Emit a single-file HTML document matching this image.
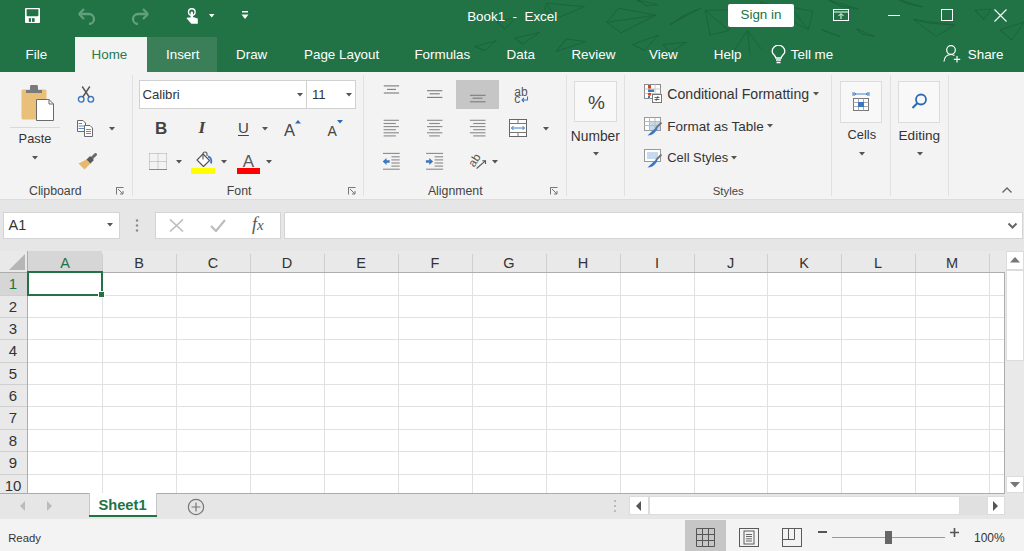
<!DOCTYPE html>
<html><head><meta charset="utf-8"><style>
html,body{margin:0;padding:0;width:1024px;height:551px;overflow:hidden;background:#fff}
body{position:relative;font-family:"Liberation Sans", sans-serif}
.t{position:absolute;white-space:nowrap;line-height:1}
svg{display:block}
</style></head><body>
<div style="position:absolute;left:0px;top:0px;width:1024px;height:72px;background:#217346"></div>
<svg style="position:absolute;left:0px;top:0px;" width="1024" height="72" viewBox="0 0 1024 72"><g fill="none" stroke="#1a5c37" stroke-width="0.9" opacity="0.75"><polygon points="546.3,3.3 584.5,6.6 556.2,18.3 544.6,10.0"/><path d="M546.3,3.3 L556.2,18.3"/><polygon points="496.4,21.6 516.4,17.4 504.7,29.0"/><path d="M496.4,21.6 L504.7,29.0"/><polygon points="514.7,38.2 539.6,32.4 523.0,44.0"/><path d="M514.7,38.2 L523.0,44.0"/><polygon points="474.8,46.5 496.4,40.7 484.8,50.7"/><path d="M474.8,46.5 L484.8,50.7"/><polygon points="556.2,51.5 586.0,41.5 566.2,39.0"/><path d="M556.2,51.5 L566.2,39.0"/><polygon points="606.9,22.3 618.6,8.2 656.0,15.2 621.0,32.8"/><path d="M606.9,22.3 L656.0,15.2"/><polygon points="670.1,24.6 700.6,8.2 686.5,14.0"/><path d="M670.1,24.6 L686.5,14.0"/><polygon points="705.3,10.5 738.0,9.4 728.7,30.5 710.0,35.2"/><path d="M705.3,10.5 L728.7,30.5"/><polygon points="632.7,44.5 658.4,35.2 644.4,50.4"/><path d="M632.7,44.5 L644.4,50.4"/><polygon points="663.0,44.5 686.5,42.2 670.0,52.7"/><path d="M663.0,44.5 L670.0,52.7"/><polygon points="637.0,0.0 658.0,4.7 646.7,5.9"/><path d="M637.0,0.0 L646.7,5.9"/><polygon points="790.0,6.9 812.9,11.4 808.3,29.7 794.6,22.9"/><path d="M790.0,6.9 L808.3,29.7"/><polygon points="828.8,0.0 858.6,9.1 840.0,6.0"/><path d="M828.8,0.0 L840.0,6.0"/><polygon points="913.4,19.4 927.0,22.9 954.5,25.1 936.3,36.6"/><path d="M913.4,19.4 L954.5,25.1"/><polygon points="975.0,10.3 991.0,9.1 984.2,19.4"/><path d="M975.0,10.3 L984.2,19.4"/><polygon points="822.0,29.7 840.3,36.6 830.0,33.0"/><path d="M822.0,29.7 L830.0,33.0"/><polygon points="856.3,28.6 874.6,36.6 862.0,34.0"/><path d="M856.3,28.6 L862.0,34.0"/><polygon points="899.7,0.0 922.5,6.9 908.0,4.0"/><path d="M899.7,0.0 L908.0,4.0"/><polygon points="760.0,2.0 785.0,8.0 770.0,18.0"/><path d="M760.0,2.0 L770.0,18.0"/><polygon points="1000.0,30.0 1024.0,22.0 1012.0,40.0"/><path d="M1000.0,30.0 L1012.0,40.0"/><path d="M733.4,51.6 L747.5,30.5 M761.5,49.2 L747.5,30.5 M750,55 L747.5,30.5"/></g></svg>
<div style="position:absolute;left:75px;top:37px;width:72px;height:35px;background:#f3f3f3"></div>
<div style="position:absolute;left:147px;top:37px;width:70px;height:35px;background:#3b7f58"></div>
<div id="tabs">
<div class="t" style="left:25.6px;top:47.9px;font-size:13.4px;color:#fff;font-weight:normal;">File</div>
<div class="t" style="left:166.0px;top:47.9px;font-size:13.4px;color:#fff;font-weight:normal;">Insert</div>
<div class="t" style="left:236.0px;top:47.9px;font-size:13.4px;color:#fff;font-weight:normal;">Draw</div>
<div class="t" style="left:304.0px;top:47.9px;font-size:13.4px;color:#fff;font-weight:normal;">Page Layout</div>
<div class="t" style="left:414.4px;top:47.9px;font-size:13.4px;color:#fff;font-weight:normal;">Formulas</div>
<div class="t" style="left:506.6px;top:47.9px;font-size:13.4px;color:#fff;font-weight:normal;">Data</div>
<div class="t" style="left:571.4px;top:47.9px;font-size:13.4px;color:#fff;font-weight:normal;">Review</div>
<div class="t" style="left:649.0px;top:47.9px;font-size:13.4px;color:#fff;font-weight:normal;">View</div>
<div class="t" style="left:713.8px;top:47.9px;font-size:13.4px;color:#fff;font-weight:normal;">Help</div>
<div class="t" style="left:790.8px;top:47.9px;font-size:13.4px;color:#fff;font-weight:normal;">Tell me</div>
<div class="t" style="left:967.8px;top:47.9px;font-size:13.4px;color:#fff;font-weight:normal;">Share</div>
<div class="t" style="left:91.6px;top:47.9px;font-size:13.4px;color:#2a7a4f;font-weight:normal;">Home</div>
</div>
<div class="t" style="left:467.2px;top:9.6px;font-size:13.4px;color:#fff;font-weight:normal;">Book1&nbsp;&nbsp;-&nbsp;&nbsp;Excel</div>
<div style="position:absolute;left:728px;top:4px;width:66px;height:23px;background:#fff;border-radius:2px"></div>
<div class="t" style="left:740.5px;top:8.3px;font-size:13.4px;color:#217346;font-weight:normal;">Sign in</div>
<svg style="position:absolute;left:25px;top:8px;" width="15" height="15" viewBox="0 0 15 15"><rect x="0" y="0" width="15" height="15" rx="1" fill="#fff"/><path d="M1.6,1.3 H13.4 V7.3 A1,1 0 0 1 12.4,8.3 H2.6 A1,1 0 0 1 1.6,7.3 Z" fill="#217346"/><rect x="3.8" y="10.2" width="5.8" height="3.7" fill="#217346"/><rect x="6" y="10.2" width="1" height="3.7" fill="#fff"/></svg>
<svg style="position:absolute;left:78px;top:8px;" width="18" height="17" viewBox="0 0 18 17"><path d="M3,6 H11 A5,5 0 0 1 11,16" fill="none" stroke="#62a07e" stroke-width="2.3"/><path d="M1,6 L6,1 M1,6 L6,11" fill="none" stroke="#62a07e" stroke-width="2.3"/></svg>
<svg style="position:absolute;left:131px;top:8px;transform:scaleX(-1)" width="18" height="17" viewBox="0 0 18 17"><path d="M3,6 H11 A5,5 0 0 1 11,16" fill="none" stroke="#62a07e" stroke-width="2.3"/><path d="M1,6 L6,1 M1,6 L6,11" fill="none" stroke="#62a07e" stroke-width="2.3"/></svg>
<svg style="position:absolute;left:185px;top:6px;" width="15" height="19" viewBox="0 0 15 19"><circle cx="6.8" cy="6.1" r="3.3" fill="none" stroke="#fff" stroke-width="1.4"/><rect x="5.6" y="5.5" width="2.4" height="8" rx="1.2" fill="#fff"/><path d="M5.8,11.5 L2.5,11.5 L1.5,12.3 L6.3,17.8 H12.8 V12.6 L7.8,11 Z" fill="#fff"/></svg>
<svg style="position:absolute;left:208.5px;top:14px;" width="6" height="4" viewBox="0 0 6 4"><path d="M0,0 H5.5 L2.75,3.5 Z" fill="#fff"/></svg>
<svg style="position:absolute;left:241px;top:11px;" width="8" height="9" viewBox="0 0 8 9"><rect x="1" y="0" width="6" height="1.5" fill="#fff"/><path d="M0.5,3.5 H7.5 L4,8 Z" fill="#fff"/></svg>
<svg style="position:absolute;left:833px;top:9px;" width="16" height="12" viewBox="0 0 16 12"><rect x="0.5" y="0.5" width="15" height="11" fill="none" stroke="#fff"/><path d="M0.5,3 H15.5" stroke="#fff"/><path d="M8,10 V5 M5.5,7 L8,4.5 L10.5,7" fill="none" stroke="#fff"/></svg>
<div style="position:absolute;left:888px;top:15px;width:12px;height:1px;background:#fff"></div>
<div style="position:absolute;left:941px;top:9px;width:12px;height:12px;border:1px solid #fff;box-sizing:border-box"></div>
<svg style="position:absolute;left:994px;top:9px;" width="13" height="13" viewBox="0 0 13 13"><path d="M0.5,0.5 L12.5,12.5 M12.5,0.5 L0.5,12.5" stroke="#fff" stroke-width="1.1"/></svg>
<svg style="position:absolute;left:771px;top:45px;" width="15" height="19" viewBox="0 0 15 19"><path d="M4.8,13 C4.8,10.5 1.2,9.5 1.2,6.5 A6.3,6.3 0 1 1 13.8,6.5 C13.8,9.5 10.2,10.5 10.2,13 Z" fill="none" stroke="#fff" stroke-width="1.3"/><path d="M5,15 H10 M5.5,17.5 H9.5" stroke="#fff" stroke-width="1.3"/></svg>
<svg style="position:absolute;left:943px;top:44px;" width="19" height="19" viewBox="0 0 19 19"><circle cx="8" cy="6" r="4.3" fill="none" stroke="#fff" stroke-width="1.2"/><path d="M1,17.5 C1.5,12.5 4.5,10.5 8,10.5 C9.5,10.5 10.5,11 11.5,11.5" fill="none" stroke="#fff" stroke-width="1.2"/><path d="M14,12 V18.5 M10.8,15.3 H17.2" stroke="#fff" stroke-width="1.2"/></svg>
<div style="position:absolute;left:0px;top:72px;width:1024px;height:128px;background:#f3f3f3"></div>
<div style="position:absolute;left:0px;top:199px;width:1024px;height:1px;background:#dcdcdc"></div>
<div style="position:absolute;left:132px;top:75px;width:1px;height:121px;background:#e1e1e1"></div>
<div style="position:absolute;left:363px;top:75px;width:1px;height:121px;background:#e1e1e1"></div>
<div style="position:absolute;left:566px;top:75px;width:1px;height:121px;background:#e1e1e1"></div>
<div style="position:absolute;left:624px;top:75px;width:1px;height:121px;background:#e1e1e1"></div>
<div style="position:absolute;left:831px;top:75px;width:1px;height:121px;background:#e1e1e1"></div>
<div style="position:absolute;left:890px;top:75px;width:1px;height:121px;background:#e1e1e1"></div>
<div style="position:absolute;left:948px;top:75px;width:1px;height:121px;background:#e1e1e1"></div>
<svg style="position:absolute;left:20px;top:85px;" width="35" height="37" viewBox="0 0 35 37"><rect x="1.5" y="4.5" width="25" height="30" rx="1.5" fill="#e9c07a"/><path d="M6,8 V5 H10 V2.5 A1.5,1.5 0 0 1 18,2.5 V5 H22 V8 Z" fill="#7a7a7a"/><path d="M16.5,14.5 H29 L33.5,19 V35.5 H16.5 Z" fill="#fff" stroke="#6a6a6a"/><path d="M29,14.5 V19 H33.5" fill="none" stroke="#6a6a6a"/></svg>
<div style="position:absolute;left:10px;top:127px;width:50px;height:1px;background:#dadada"></div>
<div class="t" style="left:18.6px;top:133.3px;font-size:12.8px;color:#333;font-weight:normal;">Paste</div>
<svg style="position:absolute;left:32px;top:155.5px;" width="6" height="4" viewBox="0 0 6 4"><path d="M0,0 H6 L3,3.5 Z" fill="#555"/></svg>
<svg style="position:absolute;left:77px;top:86px;" width="18" height="18" viewBox="0 0 18 18"><circle cx="4.2" cy="13.3" r="2.8" fill="none" stroke="#3b78c2" stroke-width="1.4"/><circle cx="13.8" cy="13.3" r="2.8" fill="none" stroke="#3b78c2" stroke-width="1.4"/><path d="M5.8,11 L12.8,0.5 M12.2,11 L5.2,0.5" stroke="#555" stroke-width="1.4"/></svg>
<svg style="position:absolute;left:76px;top:119px;" width="18" height="19" viewBox="0 0 18 19"><path d="M1.5,1.5 H7 L9.5,4 V12.5 H1.5 Z" fill="#fff" stroke="#6a6a6a"/><path d="M2.5,4.5 H6 M2.5,7 H8 M2.5,9.5 H8" stroke="#5b8fd0"/><path d="M8.5,6.5 H14 L16.5,9 V17.5 H8.5 Z" fill="#fff" stroke="#6a6a6a"/><path d="M10,10.5 H15 M10,12.5 H15 M10,14.5 H15" stroke="#5b8fd0"/></svg>
<svg style="position:absolute;left:109px;top:127px;" width="7" height="4" viewBox="0 0 7 4"><path d="M0,0 H6 L3,3.5 Z" fill="#555"/></svg>
<svg style="position:absolute;left:77px;top:152px;" width="20" height="19" viewBox="0 0 20 19"><path d="M18.5,2.5 L15,6" stroke="#6a6a6a" stroke-width="3" stroke-linecap="round"/><path d="M15,6 L11,10" stroke="#5a5a5a" stroke-width="5.5"/><path d="M9.5,7.5 L13.5,11.5 L7.5,17.5 L1.5,11.5 Z" fill="#e8b86d"/></svg>
<div class="t" style="left:29.0px;top:185.4px;font-size:12.3px;color:#444;font-weight:normal;">Clipboard</div>
<svg style="position:absolute;left:116px;top:187px;" width="8" height="8" viewBox="0 0 8 8"><path d="M0.5,0 V0.5 H7.5" fill="none" stroke="#777"/><path d="M0.5,0.5 V7.5" stroke="#777"/><path d="M2,2 L7,7 M7,4 V7 H4" fill="none" stroke="#777"/></svg>
<div style="position:absolute;left:139px;top:80px;width:168px;height:29px;background:#fff;border:1px solid #d0d0d0;box-sizing:border-box"></div>
<div style="position:absolute;left:306px;top:80px;width:50px;height:29px;background:#fff;border:1px solid #d0d0d0;box-sizing:border-box"></div>
<div class="t" style="left:142.4px;top:87.6px;font-size:13.2px;color:#333;font-weight:normal;">Calibri</div>
<div class="t" style="left:312.0px;top:87.6px;font-size:13.2px;color:#333;font-weight:normal;">11</div>
<svg style="position:absolute;left:297px;top:93px;" width="6" height="4" viewBox="0 0 6 4"><path d="M0,0 H6 L3,3.5 Z" fill="#555"/></svg>
<svg style="position:absolute;left:346px;top:93px;" width="6" height="4" viewBox="0 0 6 4"><path d="M0,0 H6 L3,3.5 Z" fill="#555"/></svg>
<div class="t" style="left:155.0px;top:119.6px;font-size:17px;color:#444;font-weight:bold;">B</div>
<div class="t" style="left:198.5px;top:119px;font-size:17.5px;color:#444;font-weight:bold;font-family:'Liberation Serif',serif;font-style:italic">I</div>
<div class="t" style="left:238.0px;top:120.0px;font-size:15px;color:#444;font-weight:normal;text-decoration:underline;text-underline-offset:2px">U</div>
<svg style="position:absolute;left:262px;top:127px;" width="6" height="4" viewBox="0 0 6 4"><path d="M0,0 H6 L3,3.5 Z" fill="#555"/></svg>
<div class="t" style="left:284.0px;top:121.8px;font-size:16.5px;color:#444;font-weight:normal;">A</div>
<svg style="position:absolute;left:295px;top:120px;" width="6" height="4" viewBox="0 0 6 4"><path d="M0,3.5 H6 L3,0 Z" fill="#2b6cb5"/></svg>
<div class="t" style="left:327.5px;top:124.2px;font-size:14px;color:#444;font-weight:normal;">A</div>
<svg style="position:absolute;left:337px;top:120px;" width="6" height="4" viewBox="0 0 6 4"><path d="M0,0 H6 L3,3.5 Z" fill="#2b6cb5"/></svg>
<svg style="position:absolute;left:149px;top:153px;" width="18" height="17" viewBox="0 0 18 17"><path d="M0.5,0.5 H17.5 M0.5,0.5 V16 M17.5,0.5 V16 M9,0.5 V16 M0.5,8.5 H17.5" stroke="#a8a8a8" stroke-dasharray="1,1" fill="none"/><path d="M0,16.5 H18" stroke="#8a8a8a"/></svg>
<svg style="position:absolute;left:176px;top:160px;" width="6" height="4" viewBox="0 0 6 4"><path d="M0,0 H6 L3,3.5 Z" fill="#555"/></svg>
<svg style="position:absolute;left:195px;top:151px;" width="20" height="17" viewBox="0 0 20 17"><path d="M2,9 L8,3 L14.5,9.5 L8.5,15.5 Z" fill="#fff" stroke="#555" stroke-width="1.1" stroke-linejoin="round"/><path d="M8,8.5 V3 A2,2 0 0 1 12,3 V5" fill="none" stroke="#555" stroke-width="1.1"/><path d="M13,5.5 C15.5,6 17,8.5 16,12.5" fill="none" stroke="#3b78c2" stroke-width="1.8"/></svg>
<div style="position:absolute;left:191px;top:168px;width:24px;height:6px;background:#ffff00"></div>
<svg style="position:absolute;left:221px;top:160px;" width="6" height="4" viewBox="0 0 6 4"><path d="M0,0 H6 L3,3.5 Z" fill="#555"/></svg>
<div class="t" style="left:242.8px;top:152.8px;font-size:17px;color:#5a5a5a;font-weight:normal;">A</div>
<div style="position:absolute;left:237px;top:168px;width:23px;height:6px;background:#ff0000"></div>
<svg style="position:absolute;left:266px;top:160px;" width="6" height="4" viewBox="0 0 6 4"><path d="M0,0 H6 L3,3.5 Z" fill="#555"/></svg>
<div class="t" style="left:226.8px;top:185.4px;font-size:12.3px;color:#444;font-weight:normal;">Font</div>
<svg style="position:absolute;left:348px;top:187px;" width="8" height="8" viewBox="0 0 8 8"><path d="M0.5,0 V0.5 H7.5" fill="none" stroke="#777"/><path d="M0.5,0.5 V7.5" stroke="#777"/><path d="M2,2 L7,7 M7,4 V7 H4" fill="none" stroke="#777"/></svg>
<div style="position:absolute;left:456px;top:80px;width:43px;height:29px;background:#c6c6c6"></div>
<svg style="position:absolute;left:370px;top:80px;" width="200" height="95" viewBox="0 0 200 95"><rect x="13.80" y="5.35" width="15.30" height="1.1" fill="#7c7c7c"/><rect x="17.00" y="8.85" width="9.00" height="1.1" fill="#7c7c7c"/><rect x="13.80" y="12.45" width="15.30" height="1.1" fill="#7c7c7c"/><rect x="57.00" y="10.15" width="15.30" height="1.1" fill="#7c7c7c"/><rect x="59.60" y="13.25" width="10.20" height="1.1" fill="#7c7c7c"/><rect x="57.00" y="16.85" width="15.30" height="1.1" fill="#7c7c7c"/><rect x="100.00" y="14.75" width="15.60" height="1.1" fill="#7c7c7c"/><rect x="102.50" y="17.65" width="10.00" height="1.1" fill="#7c7c7c"/><rect x="100.00" y="21.25" width="15.60" height="1.1" fill="#7c7c7c"/><rect x="13.60" y="39.75" width="15.30" height="1.1" fill="#8a8a8a"/><rect x="57.00" y="39.75" width="15.40" height="1.1" fill="#8a8a8a"/><rect x="99.90" y="39.75" width="15.60" height="1.1" fill="#8a8a8a"/><rect x="13.60" y="42.95" width="12.20" height="1.1" fill="#8a8a8a"/><rect x="59.20" y="42.95" width="10.60" height="1.1" fill="#8a8a8a"/><rect x="103.20" y="42.95" width="12.30" height="1.1" fill="#8a8a8a"/><rect x="13.60" y="46.05" width="15.30" height="1.1" fill="#8a8a8a"/><rect x="57.00" y="46.05" width="15.40" height="1.1" fill="#8a8a8a"/><rect x="99.90" y="46.05" width="15.60" height="1.1" fill="#8a8a8a"/><rect x="13.60" y="49.15" width="12.20" height="1.1" fill="#8a8a8a"/><rect x="59.20" y="49.15" width="10.60" height="1.1" fill="#8a8a8a"/><rect x="103.20" y="49.15" width="12.30" height="1.1" fill="#8a8a8a"/><rect x="13.60" y="52.25" width="15.30" height="1.1" fill="#8a8a8a"/><rect x="57.00" y="52.25" width="15.40" height="1.1" fill="#8a8a8a"/><rect x="99.90" y="52.25" width="15.60" height="1.1" fill="#8a8a8a"/><rect x="13.60" y="55.35" width="12.20" height="1.1" fill="#8a8a8a"/><rect x="59.20" y="55.35" width="10.60" height="1.1" fill="#8a8a8a"/><rect x="103.20" y="55.35" width="12.30" height="1.1" fill="#8a8a8a"/><rect x="13.00" y="72.85" width="16.70" height="1.1" fill="#8a8a8a"/><rect x="21.40" y="76.25" width="8.30" height="1.1" fill="#8a8a8a"/><rect x="21.40" y="79.35" width="8.30" height="1.1" fill="#8a8a8a"/><rect x="21.40" y="82.45" width="8.30" height="1.1" fill="#8a8a8a"/><rect x="21.40" y="85.55" width="8.30" height="1.1" fill="#8a8a8a"/><rect x="13.00" y="88.65" width="16.70" height="1.1" fill="#8a8a8a"/><rect x="56.10" y="72.85" width="17.00" height="1.1" fill="#8a8a8a"/><rect x="64.60" y="76.25" width="8.50" height="1.1" fill="#8a8a8a"/><rect x="64.60" y="79.35" width="8.50" height="1.1" fill="#8a8a8a"/><rect x="64.60" y="82.45" width="8.50" height="1.1" fill="#8a8a8a"/><rect x="64.60" y="85.55" width="8.50" height="1.1" fill="#8a8a8a"/><rect x="56.10" y="88.65" width="17.00" height="1.1" fill="#8a8a8a"/><path d="M12.7,81.5 L16.5,77.9 V80.2 H19.7 V82.8 H16.5 V85.1 Z" fill="#3a78c0"/><path d="M63.1,81.5 L59.3,77.9 V80.2 H55.9 V82.8 H59.3 V85.1 Z" fill="#3a78c0"/><path d="M106.6,88.5 L115.3,80.9 M112.3,80.7 H115.5 V83.9" fill="none" stroke="#555" stroke-width="1.1"/></svg>
<div class="t" style="left:514.3px;top:85.9px;font-size:12px;color:#555;font-weight:normal;">ab</div>
<div class="t" style="left:514.3px;top:93.4px;font-size:12px;color:#555;font-weight:normal;">c</div>
<svg style="position:absolute;left:520px;top:96px;" width="9" height="7" viewBox="0 0 9 7"><path d="M7.5,0.5 V4 H2 M4,2 L2,4 L4,6" fill="none" stroke="#3b78c2" stroke-width="1.1"/></svg>
<svg style="position:absolute;left:508px;top:118px;" width="20" height="20" viewBox="0 0 20 20"><rect x="1.5" y="1.5" width="17" height="17" fill="#fff" stroke="#666"/><path d="M1.5,5.5 H18.5 M1.5,14.5 H18.5 M10,1.5 V5.5 M10,14.5 V18.5" stroke="#777"/><path d="M3.5,10 H16.5 M5.5,8 L3.5,10 L5.5,12 M14.5,8 L16.5,10 L14.5,12" fill="none" stroke="#3b78c2"/></svg>
<svg style="position:absolute;left:543px;top:127px;" width="6" height="4" viewBox="0 0 6 4"><path d="M0,0 H6 L3,3.5 Z" fill="#555"/></svg>
<div class="t" style="left:469px;top:154.5px;font-size:11.5px;color:#555;transform:rotate(-58deg);transform-origin:6px 6px">ab</div>
<svg style="position:absolute;left:492px;top:160px;" width="6" height="4" viewBox="0 0 6 4"><path d="M0,0 H6 L3,3.5 Z" fill="#555"/></svg>
<div class="t" style="left:427.9px;top:185.4px;font-size:12.3px;color:#444;font-weight:normal;">Alignment</div>
<svg style="position:absolute;left:550px;top:187px;" width="8" height="8" viewBox="0 0 8 8"><path d="M0.5,0 V0.5 H7.5" fill="none" stroke="#777"/><path d="M0.5,0.5 V7.5" stroke="#777"/><path d="M2,2 L7,7 M7,4 V7 H4" fill="none" stroke="#777"/></svg>
<div style="position:absolute;left:574px;top:81px;width:43px;height:41px;background:#f8f8f8;border:1px solid #dcdcdc;box-sizing:border-box"></div>
<div class="t" style="left:588.0px;top:93.0px;font-size:19px;color:#444;font-weight:normal;">%</div>
<div class="t" style="left:570.8px;top:129.7px;font-size:13.8px;color:#333;font-weight:normal;">Number</div>
<svg style="position:absolute;left:593px;top:152px;" width="6" height="4" viewBox="0 0 6 4"><path d="M0,0 H6 L3,3.5 Z" fill="#555"/></svg>
<svg style="position:absolute;left:643px;top:84px;" width="20" height="20" viewBox="0 0 20 20"><rect x="1.5" y="0.5" width="16" height="14" fill="#fff" stroke="#8a8a8a"/><path d="M1.5,5 H17.5 M1.5,9.5 H17.5 M6.5,0.5 V14.5 M12,0.5 V14.5" stroke="#c8c8c8"/><rect x="5" y="1" width="3" height="3.5" fill="#d24726"/><rect x="5" y="5.5" width="6" height="2.5" fill="#3b78c2"/><rect x="5" y="9" width="3" height="2.5" fill="#d24726"/><rect x="5" y="12" width="2" height="2" fill="#3b78c2"/><rect x="9.5" y="10.5" width="9" height="8" fill="#fff" stroke="#777"/><path d="M11.5,13.5 H16.5 M11.5,15.5 H16.5 M15,12 L13,17" stroke="#444" stroke-width="0.8"/></svg>
<div class="t" style="left:667.3px;top:87.2px;font-size:14.1px;color:#333;font-weight:normal;">Conditional Formatting</div>
<svg style="position:absolute;left:813px;top:92px;" width="6" height="4" viewBox="0 0 6 4"><path d="M0,0 H6 L3,3.5 Z" fill="#555"/></svg>
<svg style="position:absolute;left:643px;top:117px;" width="20" height="20" viewBox="0 0 20 20"><rect x="1.5" y="0.5" width="16" height="13" fill="#fff" stroke="#999"/><rect x="6" y="4.5" width="11" height="8.5" fill="#c5d9ef"/><path d="M1.5,4.5 H17.5 M1.5,8.5 H17.5 M6.5,0.5 V13.5 M12,0.5 V13.5" stroke="#bbb"/><path d="M18.5,5.5 L13,11" stroke="#777" stroke-width="2"/><path d="M13.5,10 L11,12.5 C9,14 7,16 4.5,18.5 C8,18.5 11,17 13,14 L14.5,12 Z" fill="#3b78c2"/></svg>
<div class="t" style="left:667.3px;top:119.7px;font-size:13.5px;color:#333;font-weight:normal;">Format as Table</div>
<svg style="position:absolute;left:767px;top:124px;" width="6" height="4" viewBox="0 0 6 4"><path d="M0,0 H6 L3,3.5 Z" fill="#555"/></svg>
<svg style="position:absolute;left:643px;top:149px;" width="20" height="20" viewBox="0 0 20 20"><rect x="1.5" y="0.5" width="16" height="12" fill="#fff" stroke="#999"/><rect x="4" y="3" width="11" height="7" fill="#c5d9ef"/><path d="M18.5,5.5 L13,11" stroke="#777" stroke-width="2"/><path d="M13.5,10 L11,12.5 C9,14 7,16 4.5,18.5 C8,18.5 11,17 13,14 L14.5,12 Z" fill="#3b78c2"/></svg>
<div class="t" style="left:667.3px;top:151.8px;font-size:12.9px;color:#333;font-weight:normal;">Cell Styles</div>
<svg style="position:absolute;left:731px;top:156px;" width="6" height="4" viewBox="0 0 6 4"><path d="M0,0 H6 L3,3.5 Z" fill="#555"/></svg>
<div class="t" style="left:712.7px;top:186.0px;font-size:11.4px;color:#444;font-weight:normal;">Styles</div>
<div style="position:absolute;left:840px;top:81px;width:42px;height:42px;background:#f8f8f8;border:1px solid #dcdcdc;box-sizing:border-box"></div>
<svg style="position:absolute;left:852px;top:91px;" width="18" height="21" viewBox="0 0 18 21"><path d="M1,3 H17 M1,1 V5 M17,1 V5 M4,3 L2,1.5 M4,3 L2,4.5 M14,3 L16,1.5 M14,3 L16,4.5" fill="none" stroke="#3b78c2" stroke-width="0.9"/><rect x="1.5" y="7.5" width="15" height="12" fill="#fff" stroke="#777"/><path d="M1.5,11.5 H16.5 M1.5,15.5 H16.5 M6.5,7.5 V19.5 M11.5,7.5 V19.5" stroke="#aaa"/><rect x="6" y="11" width="6" height="5" fill="#3b78c2"/></svg>
<div class="t" style="left:847.6px;top:129.3px;font-size:12.8px;color:#333;font-weight:normal;">Cells</div>
<svg style="position:absolute;left:859px;top:152px;" width="6" height="4" viewBox="0 0 6 4"><path d="M0,0 H6 L3,3.5 Z" fill="#555"/></svg>
<div style="position:absolute;left:898px;top:81px;width:42px;height:42px;background:#f8f8f8;border:1px solid #dcdcdc;box-sizing:border-box"></div>
<svg style="position:absolute;left:911px;top:93px;" width="17" height="17" viewBox="0 0 17 17"><circle cx="10" cy="6.5" r="5" fill="none" stroke="#2b6cb5" stroke-width="1.8"/><path d="M6.5,10 L1.5,15" stroke="#2b6cb5" stroke-width="2.2"/></svg>
<div class="t" style="left:898.5px;top:129.2px;font-size:13.6px;color:#333;font-weight:normal;">Editing</div>
<svg style="position:absolute;left:917px;top:152px;" width="6" height="4" viewBox="0 0 6 4"><path d="M0,0 H6 L3,3.5 Z" fill="#555"/></svg>
<svg style="position:absolute;left:1001px;top:186px;" width="12" height="8" viewBox="0 0 12 8"><path d="M1.5,6.5 L6,2 L10.5,6.5" fill="none" stroke="#666" stroke-width="1.4"/></svg>
<div style="position:absolute;left:0px;top:200px;width:1024px;height:51px;background:#e6e6e6"></div>
<div style="position:absolute;left:3px;top:212px;width:117px;height:27px;background:#fff;border:1px solid #d4d4d4;box-sizing:border-box"></div>
<div class="t" style="left:8.5px;top:217.9px;font-size:14.5px;color:#333;font-weight:normal;">A1</div>
<svg style="position:absolute;left:107px;top:223px;" width="7" height="4" viewBox="0 0 7 4"><path d="M0,0 H6 L3,3.5 Z" fill="#555"/></svg>
<svg style="position:absolute;left:135px;top:219px;" width="4" height="13" viewBox="0 0 4 13"><circle cx="2" cy="1.5" r="1.2" fill="#8a8a8a"/><circle cx="2" cy="6.5" r="1.2" fill="#8a8a8a"/><circle cx="2" cy="11.5" r="1.2" fill="#8a8a8a"/></svg>
<div style="position:absolute;left:155px;top:212px;width:126px;height:27px;background:#fff;border:1px solid #d4d4d4;box-sizing:border-box"></div>
<svg style="position:absolute;left:169px;top:219px;" width="15" height="13" viewBox="0 0 15 13"><path d="M1,0.5 L14,12.5 M14,0.5 L1,12.5" stroke="#bdbdbd" stroke-width="1.6"/></svg>
<svg style="position:absolute;left:210px;top:219px;" width="16" height="13" viewBox="0 0 16 13"><path d="M1,7 L6,12 L15,1" fill="none" stroke="#bdbdbd" stroke-width="2.2"/></svg>
<div class="t" style="left:252px;top:214.5px;font-size:18px;color:#555;font-family:'Liberation Serif',serif;font-style:italic">f<span style="font-size:15px">x</span></div>
<div style="position:absolute;left:284px;top:212px;width:739px;height:27px;background:#fff;border:1px solid #d4d4d4;box-sizing:border-box"></div>
<svg style="position:absolute;left:1007px;top:222px;" width="11" height="8" viewBox="0 0 11 8"><path d="M1.5,1.5 L5.5,5.5 L9.5,1.5" fill="none" stroke="#666" stroke-width="2"/></svg>
<div style="position:absolute;left:0px;top:251px;width:1024px;height:242px;background:#fff"></div>
<div style="position:absolute;left:0px;top:251px;width:1005px;height:21px;background:#e9e9e9"></div>
<div style="position:absolute;left:0px;top:272px;width:28px;height:221px;background:#e9e9e9"></div>
<div style="position:absolute;left:28px;top:251px;width:74px;height:21px;background:#d6d6d6"></div>
<div style="position:absolute;left:0px;top:272px;width:27px;height:23px;background:#d6d6d6"></div>
<svg style="position:absolute;left:9px;top:254px;" width="17" height="17" viewBox="0 0 17 17"><path d="M16,0 V16 H0 Z" fill="#b6b6b6"/></svg>
<svg style="position:absolute;left:0;top:251px" width="1024" height="243">
<rect x="102" y="3" width="1" height="18" fill="#cfcfcf"/><rect x="102" y="21" width="1" height="222" fill="#e1e1e1"/><rect x="176" y="3" width="1" height="18" fill="#cfcfcf"/><rect x="176" y="21" width="1" height="222" fill="#e1e1e1"/><rect x="250" y="3" width="1" height="18" fill="#cfcfcf"/><rect x="250" y="21" width="1" height="222" fill="#e1e1e1"/><rect x="324" y="3" width="1" height="18" fill="#cfcfcf"/><rect x="324" y="21" width="1" height="222" fill="#e1e1e1"/><rect x="398" y="3" width="1" height="18" fill="#cfcfcf"/><rect x="398" y="21" width="1" height="222" fill="#e1e1e1"/><rect x="472" y="3" width="1" height="18" fill="#cfcfcf"/><rect x="472" y="21" width="1" height="222" fill="#e1e1e1"/><rect x="546" y="3" width="1" height="18" fill="#cfcfcf"/><rect x="546" y="21" width="1" height="222" fill="#e1e1e1"/><rect x="620" y="3" width="1" height="18" fill="#cfcfcf"/><rect x="620" y="21" width="1" height="222" fill="#e1e1e1"/><rect x="694" y="3" width="1" height="18" fill="#cfcfcf"/><rect x="694" y="21" width="1" height="222" fill="#e1e1e1"/><rect x="767" y="3" width="1" height="18" fill="#cfcfcf"/><rect x="767" y="21" width="1" height="222" fill="#e1e1e1"/><rect x="841" y="3" width="1" height="18" fill="#cfcfcf"/><rect x="841" y="21" width="1" height="222" fill="#e1e1e1"/><rect x="915" y="3" width="1" height="18" fill="#cfcfcf"/><rect x="915" y="21" width="1" height="222" fill="#e1e1e1"/><rect x="989" y="3" width="1" height="18" fill="#cfcfcf"/><rect x="989" y="21" width="1" height="222" fill="#e1e1e1"/><rect x="0" y="44" width="27" height="1" fill="#cfcfcf"/><rect x="28" y="44" width="977" height="1" fill="#e1e1e1"/><rect x="0" y="66" width="27" height="1" fill="#cfcfcf"/><rect x="28" y="66" width="977" height="1" fill="#e1e1e1"/><rect x="0" y="88" width="27" height="1" fill="#cfcfcf"/><rect x="28" y="88" width="977" height="1" fill="#e1e1e1"/><rect x="0" y="111" width="27" height="1" fill="#cfcfcf"/><rect x="28" y="111" width="977" height="1" fill="#e1e1e1"/><rect x="0" y="133" width="27" height="1" fill="#cfcfcf"/><rect x="28" y="133" width="977" height="1" fill="#e1e1e1"/><rect x="0" y="155" width="27" height="1" fill="#cfcfcf"/><rect x="28" y="155" width="977" height="1" fill="#e1e1e1"/><rect x="0" y="178" width="27" height="1" fill="#cfcfcf"/><rect x="28" y="178" width="977" height="1" fill="#e1e1e1"/><rect x="0" y="200" width="27" height="1" fill="#cfcfcf"/><rect x="28" y="200" width="977" height="1" fill="#e1e1e1"/><rect x="0" y="223" width="27" height="1" fill="#cfcfcf"/><rect x="28" y="223" width="977" height="1" fill="#e1e1e1"/><rect x="0" y="21" width="1005" height="1" fill="#adadad"/><rect x="27" y="0" width="1" height="243" fill="#adadad"/><rect x="1004" y="21" width="1" height="222" fill="#adadad"/></svg>
<div class="t" style="left:45.0px;width:40px;text-align:center;top:255.7px;font-size:14.5px;color:#217346">A</div>
<div class="t" style="left:119.0px;width:40px;text-align:center;top:255.7px;font-size:14.5px;color:#333">B</div>
<div class="t" style="left:193.0px;width:40px;text-align:center;top:255.7px;font-size:14.5px;color:#333">C</div>
<div class="t" style="left:267.0px;width:40px;text-align:center;top:255.7px;font-size:14.5px;color:#333">D</div>
<div class="t" style="left:341.0px;width:40px;text-align:center;top:255.7px;font-size:14.5px;color:#333">E</div>
<div class="t" style="left:415.0px;width:40px;text-align:center;top:255.7px;font-size:14.5px;color:#333">F</div>
<div class="t" style="left:489.0px;width:40px;text-align:center;top:255.7px;font-size:14.5px;color:#333">G</div>
<div class="t" style="left:563.0px;width:40px;text-align:center;top:255.7px;font-size:14.5px;color:#333">H</div>
<div class="t" style="left:637.0px;width:40px;text-align:center;top:255.7px;font-size:14.5px;color:#333">I</div>
<div class="t" style="left:710.5px;width:40px;text-align:center;top:255.7px;font-size:14.5px;color:#333">J</div>
<div class="t" style="left:784.0px;width:40px;text-align:center;top:255.7px;font-size:14.5px;color:#333">K</div>
<div class="t" style="left:858.0px;width:40px;text-align:center;top:255.7px;font-size:14.5px;color:#333">L</div>
<div class="t" style="left:932.0px;width:40px;text-align:center;top:255.7px;font-size:14.5px;color:#333">M</div>
<div class="t" style="left:0px;width:26px;text-align:center;top:276.2px;font-size:15px;color:#217346">1</div>
<div class="t" style="left:0px;width:26px;text-align:center;top:299.2px;font-size:15px;color:#333">2</div>
<div class="t" style="left:0px;width:26px;text-align:center;top:321.2px;font-size:15px;color:#333">3</div>
<div class="t" style="left:0px;width:26px;text-align:center;top:343.2px;font-size:15px;color:#333">4</div>
<div class="t" style="left:0px;width:26px;text-align:center;top:366.2px;font-size:15px;color:#333">5</div>
<div class="t" style="left:0px;width:26px;text-align:center;top:388.2px;font-size:15px;color:#333">6</div>
<div class="t" style="left:0px;width:26px;text-align:center;top:410.2px;font-size:15px;color:#333">7</div>
<div class="t" style="left:0px;width:26px;text-align:center;top:433.2px;font-size:15px;color:#333">8</div>
<div class="t" style="left:0px;width:26px;text-align:center;top:455.2px;font-size:15px;color:#333">9</div>
<div class="t" style="left:0px;width:26px;text-align:center;top:478.2px;font-size:15px;color:#333">10</div>
<div style="position:absolute;left:27px;top:271px;width:76px;height:25px;border:2px solid #217346;box-sizing:border-box"></div>
<div style="position:absolute;left:98px;top:291px;width:5px;height:5px;background:#217346;border:1px solid #fff;box-sizing:content-box"></div>
<div style="position:absolute;left:1005px;top:251px;width:19px;height:242px;background:#e9e9e9"></div>
<div style="position:absolute;left:1006px;top:251px;width:18px;height:19px;background:#fff;border:1px solid #dcdcdc;box-sizing:border-box"></div>
<svg style="position:absolute;left:1010px;top:257px;" width="10" height="6" viewBox="0 0 10 6"><path d="M0,5.5 H10 L5,0 Z" fill="#777"/></svg>
<div style="position:absolute;left:1006px;top:270px;width:18px;height:91px;background:#fff;border:1px solid #dcdcdc;box-sizing:border-box"></div>
<div style="position:absolute;left:1006px;top:476px;width:18px;height:17px;background:#fff;border:1px solid #dcdcdc;box-sizing:border-box"></div>
<svg style="position:absolute;left:1010px;top:482px;" width="10" height="6" viewBox="0 0 10 6"><path d="M0,0 H10 L5,5.5 Z" fill="#777"/></svg>
<div style="position:absolute;left:0px;top:493px;width:1024px;height:26px;background:#e6e6e6"></div>
<div style="position:absolute;left:0px;top:493px;width:1005px;height:1px;background:#ababab"></div>
<svg style="position:absolute;left:20px;top:501px;" width="6" height="10" viewBox="0 0 6 10"><path d="M5,0 V10 L0,5 Z" fill="#bbb"/></svg>
<svg style="position:absolute;left:47px;top:501px;" width="6" height="10" viewBox="0 0 6 10"><path d="M0,0 V10 L5,5 Z" fill="#bbb"/></svg>
<div style="position:absolute;left:89px;top:493px;width:68px;height:24px;background:#fff;border-left:1px solid #c6c6c6;border-right:1px solid #c6c6c6;box-sizing:border-box"></div>
<div style="position:absolute;left:89px;top:515px;width:68px;height:2px;background:#217346"></div>
<div class="t" style="left:98.4px;top:497.6px;font-size:14.7px;color:#217346;font-weight:bold;">Sheet1</div>
<svg style="position:absolute;left:187px;top:498px;" width="18" height="18" viewBox="0 0 18 18"><circle cx="9" cy="9" r="7.6" fill="none" stroke="#777" stroke-width="1.2"/><path d="M9,4.5 V13.5 M4.5,9 H13.5" stroke="#777" stroke-width="1.2"/></svg>
<svg style="position:absolute;left:613px;top:499px;" width="4" height="15" viewBox="0 0 4 15"><circle cx="2" cy="2" r="1" fill="#aaa"/><circle cx="2" cy="7" r="1" fill="#aaa"/><circle cx="2" cy="12" r="1" fill="#aaa"/></svg>
<div style="position:absolute;left:629px;top:496px;width:376px;height:19px;background:#e0e0e0"></div>
<div style="position:absolute;left:629px;top:496px;width:20px;height:19px;background:#fff;border:1px solid #dcdcdc;box-sizing:border-box"></div>
<svg style="position:absolute;left:636px;top:501px;" width="6" height="10" viewBox="0 0 6 10"><path d="M5,0 V10 L0,5 Z" fill="#555"/></svg>
<div style="position:absolute;left:649px;top:496px;width:311px;height:19px;background:#fff;border:1px solid #dcdcdc;box-sizing:border-box"></div>
<div style="position:absolute;left:987px;top:496px;width:18px;height:19px;background:#fff;border:1px solid #dcdcdc;box-sizing:border-box"></div>
<svg style="position:absolute;left:993px;top:501px;" width="6" height="10" viewBox="0 0 6 10"><path d="M0,0 V10 L5,5 Z" fill="#555"/></svg>
<div style="position:absolute;left:0px;top:519px;width:1024px;height:32px;background:#f3f3f3"></div>
<div class="t" style="left:8.2px;top:532.8px;font-size:11.3px;color:#333;font-weight:normal;">Ready</div>
<div style="position:absolute;left:685px;top:520px;width:41px;height:31px;background:#c6c6c6"></div>
<svg style="position:absolute;left:696px;top:528px;" width="19" height="19" viewBox="0 0 19 19"><path d="M0.5,0.5 H18.5 V18.5 H0.5 Z M0.5,6.5 H18.5 M0.5,12.5 H18.5 M6.5,0.5 V18.5 M12.5,0.5 V18.5" fill="none" stroke="#555"/></svg>
<svg style="position:absolute;left:739px;top:528px;" width="20" height="19" viewBox="0 0 20 19"><rect x="0.5" y="0.5" width="19" height="18" fill="none" stroke="#5a5a5a"/><rect x="5" y="3" width="10" height="13" fill="none" stroke="#5a5a5a"/><path d="M7,6.5 H13 M7,8.5 H13 M7,10.8 H13 M7,13 H13" stroke="#666"/></svg>
<svg style="position:absolute;left:782px;top:528px;" width="20" height="19" viewBox="0 0 20 19"><rect x="0.5" y="0.5" width="19" height="18" fill="none" stroke="#5a5a5a"/><path d="M0.5,11.5 H12.5 V0.5 M6.5,0.5 V11.5" fill="none" stroke="#5a5a5a"/></svg>
<div style="position:absolute;left:818px;top:531px;width:9px;height:2px;background:#555"></div>
<div style="position:absolute;left:832px;top:537px;width:113px;height:1px;background:#999"></div>
<div style="position:absolute;left:885px;top:531px;width:7px;height:13px;background:#666"></div>
<svg style="position:absolute;left:950px;top:528px;" width="9" height="9" viewBox="0 0 9 9"><path d="M4.5,0 V9 M0,4.5 H9" stroke="#555" stroke-width="1.6"/></svg>
<div class="t" style="left:974.0px;top:532.4px;font-size:12px;color:#333;font-weight:normal;">100%</div>
</body></html>
